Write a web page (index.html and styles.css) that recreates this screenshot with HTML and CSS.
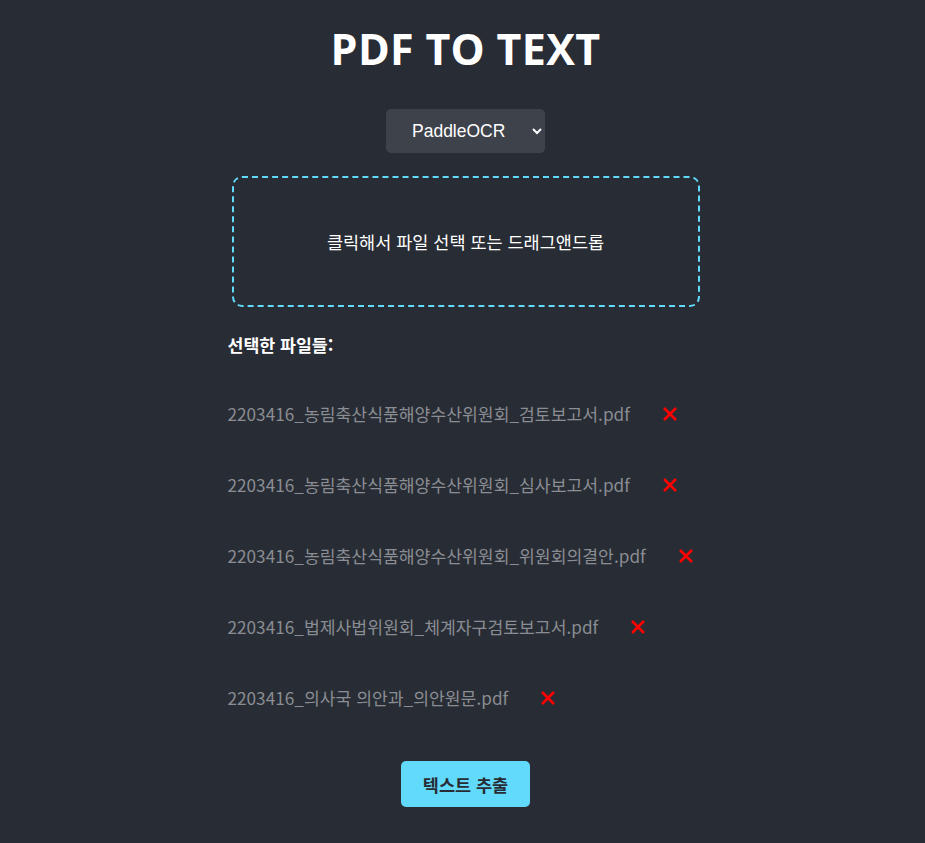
FILE: index.html
```html
<!DOCTYPE html>
<html lang="ko">
<head>
<meta charset="utf-8">
<link rel="stylesheet" href="styles.css">
</head>
<body>
<main class="app">
  <h1 class="title">PDF TO TEXT</h1>
  <select class="engine">
    <option>PaddleOCR</option>
  </select>
  <div class="dropzone">클릭해서 파일 선택 또는 드래그앤드롭</div>
  <section class="files">
    <h3 class="files-title">선택한 파일들:</h3>
    <ul class="file-list">
      <li class="file"><span class="name">2203416_농림축산식품해양수산위원회_검토보고서.pdf</span><button class="remove"><svg viewBox="0 0 16 16" width="16" height="16"><path d="M2 2L14 14M14 2L2 14" stroke="#ff0000" stroke-width="2.6"/></svg></button></li>
      <li class="file"><span class="name">2203416_농림축산식품해양수산위원회_심사보고서.pdf</span><button class="remove"><svg viewBox="0 0 16 16" width="16" height="16"><path d="M2 2L14 14M14 2L2 14" stroke="#ff0000" stroke-width="2.6"/></svg></button></li>
      <li class="file"><span class="name">2203416_농림축산식품해양수산위원회_위원회의결안.pdf</span><button class="remove"><svg viewBox="0 0 16 16" width="16" height="16"><path d="M2 2L14 14M14 2L2 14" stroke="#ff0000" stroke-width="2.6"/></svg></button></li>
      <li class="file"><span class="name">2203416_법제사법위원회_체계자구검토보고서.pdf</span><button class="remove"><svg viewBox="0 0 16 16" width="16" height="16"><path d="M2 2L14 14M14 2L2 14" stroke="#ff0000" stroke-width="2.6"/></svg></button></li>
      <li class="file"><span class="name">2203416_의사국 의안과_의안원문.pdf</span><button class="remove"><svg viewBox="0 0 16 16" width="16" height="16"><path d="M2 2L14 14M14 2L2 14" stroke="#ff0000" stroke-width="2.6"/></svg></button></li>
    </ul>
  </section>
  <button class="extract">텍스트 추출</button>
</main>
</body>
</html>
```
FILE: styles.css
```css
html, body {
  margin: 0;
  padding: 0;
  background: #282c34;
  min-height: 100%;
}
body {
  font-family: "Open Sans", "Noto Sans CJK KR", sans-serif;
  color: #ffffff;
  padding-left: 6px;
}
.app {
  display: flex;
  flex-direction: column;
  align-items: center;
  padding-top: 21px;
}
.title {
  margin: 0;
  font-family: "Open Sans", sans-serif;
  font-weight: 700;
  font-size: 43px;
  line-height: 56px;
  letter-spacing: 0.3px;
}
.engine {
  margin-top: 32px;
  width: 159px;
  height: 44px;
  background: #3e424b;
  color: #ffffff;
  border: none;
  border-radius: 5px;
  font-family: "Liberation Sans", Arial, sans-serif;
  font-size: 17.5px;
  padding: 0 10px 0 22px;
}
.dropzone {
  margin-top: 23px;
  box-sizing: border-box;
  width: 468px;
  height: 131px;
  border: 2px dashed #61dafb;
  border-radius: 10px;
  display: flex;
  align-items: center;
  justify-content: center;
  font-family: "Noto Sans CJK KR", sans-serif;
  font-size: 17.5px;
  padding-bottom: 1px;
}
.files {
  width: 476px;
  margin-top: 23px;
}
.files-title {
  margin: 0;
  font-family: "Noto Sans CJK KR", sans-serif;
  font-weight: 700;
  font-size: 17.3px;
  line-height: 30px;
}
.file-list {
  list-style: none;
  margin: 0;
  padding: 41px 0 0 0;
  display: flex;
  flex-direction: column;
  gap: 47px;
}
.file {
  display: flex;
  align-items: center;
  height: 24px;
}
.name {
  color: #8a8d93;
  font-family: "Noto Sans CJK KR", sans-serif;
  font-size: 17.2px;
  white-space: nowrap;
}
.remove {
  margin-left: 32px;
  margin-top: 2px;
  background: none;
  border: none;
  padding: 0;
  display: flex;
  cursor: pointer;
}
.extract {
  margin-top: 52px;
  width: 129px;
  height: 46px;
  background: #61dafb;
  color: #282c34;
  border: none;
  border-radius: 5px;
  font-family: "Noto Sans CJK KR", sans-serif;
  font-weight: 700;
  font-size: 17.5px;
}
```
